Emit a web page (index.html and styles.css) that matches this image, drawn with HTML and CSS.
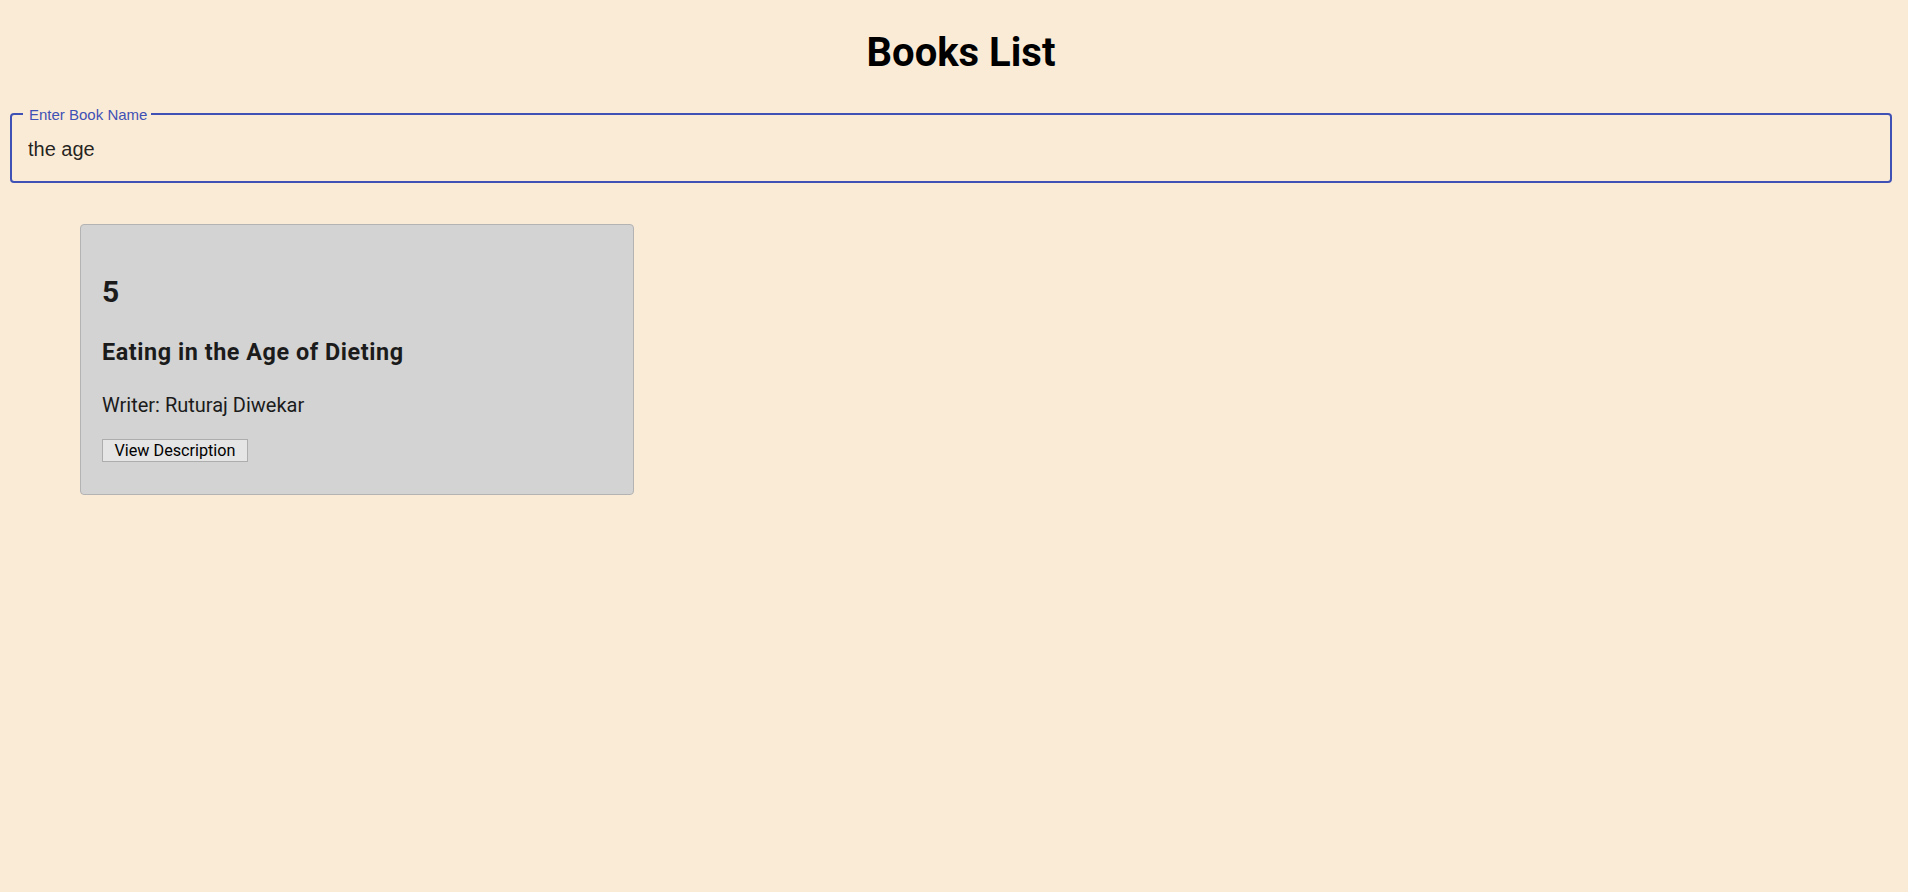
FILE: index.html
```html
<!DOCTYPE html>
<html lang="en">
<head>
<meta charset="utf-8">
<title>Books List</title>
<link rel="stylesheet" href="styles.css">
</head>
<body>
<div class="page">
  <h1 class="title">Books List</h1>
  <div class="field">
    <label class="field-label" for="book">Enter Book Name</label>
    <input class="field-input" id="book" type="text" value="the age">
  </div>
  <div class="book-list">
    <div class="book-card">
      <h2 class="book-id">5</h2>
      <h3 class="book-title">Eating in the Age of Dieting</h3>
      <p class="book-writer">Writer: Ruturaj Diwekar</p>
      <button class="book-btn" type="button">View Description</button>
    </div>
  </div>
</div>
</body>
</html>
```
FILE: styles.css
```css
html, body {
  margin: 0;
  padding: 0;
  background: #faebd7;
}
body {
  font-family: Roboto, "Liberation Sans", sans-serif;
  color: #000;
}
.page {
  padding: 0 16px 0 10px;
}
.title {
  margin: 29px 0 0;
  padding-left: 20px;
  font-size: 40px;
  line-height: 48px;
  font-weight: 700;
  text-align: center;
}
.field {
  position: relative;
  margin-top: 36px;
  border: 2px solid #3f51b5;
  border-radius: 4px;
}
.field-label {
  position: absolute;
  left: 11px;
  top: -8px;
  padding: 0 4px 0 6px;
  background: #faebd7;
  color: #3f51b5;
  font-family: "Liberation Sans", Arial, sans-serif;
  font-size: 15px;
  line-height: 16px;
}
.field-input {
  display: block;
  box-sizing: border-box;
  width: 100%;
  margin: 0;
  border: 0;
  outline: none;
  background: transparent;
  padding: 22.5px 16px 20.5px;
  height: 66px;
  font-family: "Liberation Sans", Arial, sans-serif;
  font-size: 20px;
  line-height: 23px;
  color: rgba(0, 0, 0, 0.87);
}
.book-list {
  display: flex;
  flex-wrap: wrap;
  padding: 41px 0 0 70px;
}
.book-card {
  box-sizing: border-box;
  width: 554px;
  padding: 20px 20px 31.7px 21px;
  background: #d3d3d3;
  border: 1px solid #b3b3b3;
  border-radius: 4px;
  color: #1b1b1b;
  display: flex;
  flex-direction: column;
  align-items: flex-start;
}
.book-id {
  margin: 28.7px 0 0;
  font-size: 30px;
  line-height: 36px;
  font-weight: 700;
}
.book-title {
  margin: 28.6px 0 0;
  font-size: 23.4px;
  line-height: 28px;
  font-weight: 700;
  letter-spacing: 0.55px;
}
.book-writer {
  margin: 26.9px 0 0;
  font-size: 20px;
  line-height: 24px;
}
.book-btn {
  margin-top: 22.1px;
  padding: 0 11.5px;
  height: 23px;
  font-family: Roboto, "Liberation Sans", sans-serif;
  font-size: 16.2px;
  line-height: 21px;
  color: #000;
  background: #e5e5e5;
  border: 1px solid #adadad;
  border-radius: 0;
}
```
